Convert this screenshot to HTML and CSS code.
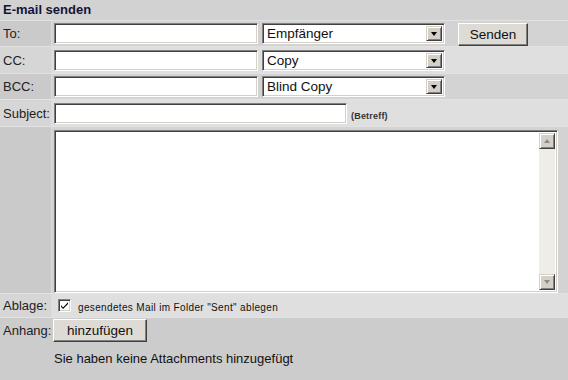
FILE: index.html
```html
<!DOCTYPE html>
<html lang="de">
<head>
<meta charset="utf-8">
<title>E-mail senden</title>
<link rel="stylesheet" href="styles.css">
</head>
<body>
<div class="page">
  <div class="header">E-mail senden</div>

  <div class="row dark r-to">
    <div class="label">To:</div>
    <div class="cell">
      <div class="field w-addr"></div>
      <div class="select"><span class="sel-text">Empfänger</span><span class="sel-btn"><i class="tri"></i></span></div>
      <div class="btn btn-send">Senden</div>
    </div>
  </div>

  <div class="row light r-cc">
    <div class="label">CC:</div>
    <div class="cell">
      <div class="field w-addr"></div>
      <div class="select"><span class="sel-text">Copy</span><span class="sel-btn"><i class="tri"></i></span></div>
    </div>
  </div>

  <div class="row dark r-bcc">
    <div class="label">BCC:</div>
    <div class="cell">
      <div class="field w-addr"></div>
      <div class="select"><span class="sel-text">Blind Copy</span><span class="sel-btn"><i class="tri"></i></span></div>
    </div>
  </div>

  <div class="row light r-subj">
    <div class="label">Subject:</div>
    <div class="cell">
      <div class="field w-subj"></div>
      <span class="hint">(Betreff)</span>
    </div>
  </div>

  <div class="row dark r-text">
    <div class="label"></div>
    <div class="cell top">
      <div class="textarea">
        <div class="scroll">
          <span class="sb-btn"><i class="tri-up"></i></span>
          <span class="sb-track"></span>
          <span class="sb-btn"><i class="tri-down"></i></span>
        </div>
      </div>
    </div>
  </div>

  <div class="row light r-abl">
    <div class="label">Ablage:</div>
    <div class="cell">
      <span class="checkbox"><svg width="9" height="9" viewBox="0 0 9 9"><path d="M1 4 L3 6.5 L8 1.2 L8 3 L3 8 L1 5.8 Z" fill="#000"/></svg></span>
      <span class="small">gesendetes Mail im Folder "Sent" ablegen</span>
    </div>
  </div>

  <div class="row base r-anh">
    <div class="label plain">Anhang:</div>
    <div class="cell">
      <div class="btn btn-add">hinzufügen</div>
    </div>
  </div>

  <div class="footer">
    <div class="msg">Sie haben keine Attachments hinzugefügt</div>
  </div>
</div>
</body>
</html>
```

FILE: styles.css
```css
html, body {
  margin: 0;
  padding: 0;
  background: #cccccc;
}
body {
  font-family: "Liberation Sans", Arial, sans-serif;
  color: #1e1e1e;
}
.page {
  width: 568px;
  height: 380px;
  background: #cccccc;
  overflow: hidden;
}
.header {
  height: 20px;
  line-height: 20px;
  padding-left: 3px;
  background: #d2d2d2;
  border-bottom: 1px solid #e2e2e2;
  font-size: 13px;
  font-weight: bold;
  color: #14143a;
}
.row {
  display: flex;
  border-bottom: 1px solid #e2e2e2;
}
.row.dark { background: #d3d3d3; }
.row.light { background: #dfdfdf; }
.row.base { background: #cccccc; border-bottom: none; }
.label {
  width: 48px;
  flex: none;
  padding-left: 3px;
  font-size: 13px;
  color: #222;
  display: flex;
  align-items: center;
  border-right: 1px solid #dcdcdc;
  background: rgba(0,0,0,0.04);
}
.label.plain { background: transparent; border-right: none; }
.cell {
  flex: 1;
  display: flex;
  align-items: center;
  padding-left: 2px;
}
.cell.top { align-items: flex-start; padding-top: 3px; }

.r-to { height: 25px; }
.r-cc { height: 26px; }
.r-bcc { height: 25px; }
.r-subj { height: 26px; }
.r-text { height: 166px; }
.r-abl { height: 23px; }
.r-anh { height: 25px; }

/* sunken fields */
.field, .select, .textarea, .checkbox {
  box-sizing: border-box;
  background: #fff;
  border: 1px solid;
  border-color: #808080 #ffffff #ffffff #808080;
  box-shadow: inset 1px 1px 0 #404040, inset -1px -1px 0 #d4d0c8;
}
.field { height: 21px; }
.w-addr { width: 204px; }
.w-subj { width: 293px; }
.hint {
  font-size: 9px;
  font-weight: bold;
  color: #333;
  margin-left: 4px;
  margin-top: 6px;
  letter-spacing: 0.2px;
}

.select {
  width: 183px;
  height: 21px;
  margin-left: 4px;
  display: flex;
  align-items: center;
  padding: 2px;
}
.sel-text {
  flex: 1;
  font-size: 13.5px;
  color: #111;
  padding-left: 2px;
}
.sel-btn {
  width: 16px;
  height: 15px;
  box-sizing: border-box;
  background: #d4d0c8;
  border: 1px solid;
  border-color: #d4d0c8 #404040 #404040 #d4d0c8;
  box-shadow: inset 1px 1px 0 #fff, inset -1px -1px 0 #808080;
  display: flex;
  align-items: center;
  justify-content: center;
}
.tri {
  width: 0;
  height: 0;
  border-left: 3.5px solid transparent;
  border-right: 3.5px solid transparent;
  border-top: 4px solid #000;
  margin-top: 1px;
}

/* raised buttons */
.btn {
  box-sizing: border-box;
  background: #dedbd4;
  border: 1px solid;
  border-color: #ffffff #404040 #404040 #ffffff;
  box-shadow: inset -1px -1px 0 #808080;
  font-size: 13.5px;
  color: #111;
  display: flex;
  align-items: center;
  justify-content: center;
}
.btn-send {
  width: 70px;
  height: 23px;
  margin-left: 13px;
  align-self: flex-start;
  margin-top: 2px;
}
.btn-add {
  width: 94px;
  height: 23px;
  align-self: flex-start;
  margin-top: 1px;
}

/* textarea */
.textarea {
  width: 504px;
  height: 163px;
  padding: 2px;
  display: flex;
  justify-content: flex-end;
}
.scroll {
  width: 16px;
  display: flex;
  flex-direction: column;
}
.sb-track {
  flex: 1;
  background: #eeede8;
}
.sb-btn {
  width: 16px;
  height: 16px;
  box-sizing: border-box;
  background: #d4d0c8;
  border: 1px solid;
  border-color: #d4d0c8 #404040 #404040 #d4d0c8;
  box-shadow: inset 1px 1px 0 #fff, inset -1px -1px 0 #808080;
  display: flex;
  align-items: center;
  justify-content: center;
}
.tri-up, .tri-down {
  width: 0;
  height: 0;
  border-left: 3.5px solid transparent;
  border-right: 3.5px solid transparent;
}
.tri-up { border-bottom: 4px solid #8a8a8a; }
.tri-down { border-top: 4px solid #8a8a8a; }

/* checkbox */
.checkbox {
  width: 13px;
  height: 13px;
  margin-left: 4px;
  display: flex;
  align-items: center;
  justify-content: center;
}
.small {
  font-size: 10px;
  color: #111;
  margin-left: 7px;
  margin-top: 3px;
  letter-spacing: 0.35px;
}

.footer {
  padding: 8px 0 0 54px;
}
.msg {
  font-size: 13px;
  color: #111;
}
```
